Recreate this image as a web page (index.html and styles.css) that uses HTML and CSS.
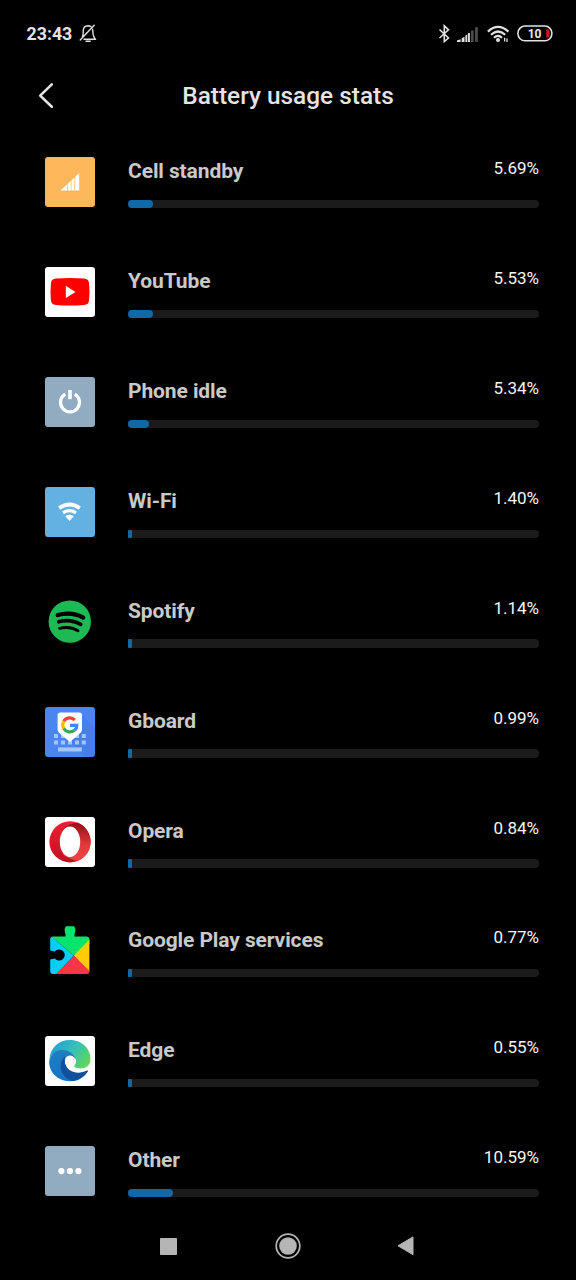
FILE: index.html
```html
<!DOCTYPE html>
<html lang="en">
<head>
<meta charset="utf-8">
<title>Battery usage stats</title>
<link rel="stylesheet" href="styles.css">
</head>
<body>
<div class="screen">
  <header class="status">
    <div class="status-left">
      <span class="clock">23:43</span>
      <svg class="mute" width="18" height="20" viewBox="0 0 18 20" fill="none" stroke="#e2e2e2" stroke-width="1.4" stroke-linecap="round"><path d="M3.5 14 Q4.4 11.5 4.2 8 Q4.3 3 9 2.8 Q10.8 2.8 12 3.7M13.6 6.5 Q14 8 14 11 Q14.4 13.3 16.2 16.2H5M7 18.2H11.2M1.2 17 15.2 2.2"/></svg>
    </div>
    <div class="status-right">
      <svg width="13" height="20" viewBox="0 0 13 20" fill="none" stroke="#e2e2e2" stroke-width="1.6"><path d="M1.5 5.5 10.5 14 6.3 17.6V1.8L10.5 5.8 1.5 14"/></svg>
      <svg class="signal" width="22" height="17" viewBox="0 0 22 17"><path fill="#e2e2e2" d="M0 16V14.6L3.6 13.2V16ZM4.7 16V12.3L7.5 10.8V16ZM8.4 16V9.6L10.2 8.4V16ZM10.9 16V7H12.9V16Z"/><path fill="#4a4a4a" d="M14 16V4.5H16.7V16ZM18 16V1.2H20.9V16Z"/></svg>
      <svg class="wifi" width="23" height="18" viewBox="0 0 23 18"><g fill="none" stroke="#e2e2e2" stroke-width="2.2"><path d="M.9 6.6Q11-2.8 21.4 6.6"/><path d="M4 9.8Q11 3.2 18.2 9.8"/><path d="M7 12.7Q11 9 15 12.7"/></g><circle cx="11" cy="14.9" r="2" fill="#e2e2e2"/><path stroke="#e2e2e2" d="M17.6 12.8V16.4M20 13.4V17" stroke-width="1.3"/></svg>
      <svg class="battery" width="36" height="17" viewBox="0 0 36 17"><rect x=".9" y="1" width="34" height="14.8" rx="7.2" fill="none" stroke="#e2e2e2" stroke-width="1.6"/><path fill="#c90f22" d="M29.5 3.4Q33 4.5 33 8.4T29.5 13.4Q28.6 8.4 29.5 3.4Z"/><text x="17.6" y="12.9" text-anchor="middle" fill="#e8e8e8" class="level">10</text></svg>
    </div>
  </header>
  <div class="title-bar">
    <svg class="back" width="18" height="28" viewBox="0 0 18 28" fill="none" stroke="#e4e4e4" stroke-width="2.6" stroke-linecap="round" stroke-linejoin="round"><path d="M14.8 2.4 3.2 13.6 14.8 24.8"/></svg>
    <h1>Battery usage stats</h1>
  </div>
  <main class="list">
    <section class="row">
      <svg class="icon" viewBox="0 0 50 50"><rect width="50" height="50" rx="3" fill="#feb75b"/><path fill="#fff" d="M15.3 33.4 22.2 27.2V33.4ZM22.9 33.4V26.6L25.8 24V33.4ZM26.4 33.4V23.4L29.4 20.6V33.4ZM30.2 33.4V19.8L34.2 16V33.4Z"/></svg>
      <div class="info"><div class="line"><h2>Cell standby</h2><span>5.69%</span></div><div class="track"><div class="fill" style="width:25px"></div></div></div>
    </section>
    <section class="row">
      <svg class="icon" viewBox="0 0 50 50"><rect width="50" height="50" rx="3" fill="#fff"/><path fill="#f00" d="M11 11.6Q25 10.6 39 11.6Q43.6 11.9 44.1 16.4Q44.9 24.8 44.1 33.2Q43.6 37.6 39 38Q25 39 11 38Q6.4 37.6 5.9 33.2Q5.1 24.8 5.9 16.4Q6.4 11.9 11 11.6Z"/><path fill="#fff" d="M20.8 18.8V31L30.6 24.9Z"/></svg>
      <div class="info"><div class="line"><h2>YouTube</h2><span>5.53%</span></div><div class="track"><div class="fill" style="width:25px"></div></div></div>
    </section>
    <section class="row">
      <svg class="icon" viewBox="0 0 50 50"><rect width="50" height="50" rx="3" fill="#91acc0"/><g fill="none" stroke="#fff" stroke-width="3.2"><path d="M20.2 17.2A9.5 9.5 0 1 0 29.8 17.2"/><path stroke-width="3.6" d="M25 13V22.2"/></g></svg>
      <div class="info"><div class="line"><h2>Phone idle</h2><span>5.34%</span></div><div class="track"><div class="fill" style="width:21px"></div></div></div>
    </section>
    <section class="row">
      <svg class="icon" viewBox="0 0 50 50"><rect width="50" height="50" rx="3" fill="#63b1e2"/><g fill="none" stroke="#fff" stroke-width="3.8"><path d="M14.2 21.1Q24.5 14 34.8 21.1"/><path stroke-width="3.2" d="M18 25.8Q24.5 21.6 31 25.8"/></g><path fill="#fff" d="M20.2 29.2Q24.5 26.4 28.8 29.2L24.5 34Z"/></svg>
      <div class="info"><div class="line"><h2>Wi-Fi</h2><span>1.40%</span></div><div class="track"><div class="fill sliver"></div></div></div>
    </section>
    <section class="row">
      <svg class="icon" viewBox="0 0 50 50"><circle cx="24.8" cy="24.6" r="21.2" fill="#1db954"/><g fill="none" stroke="#000" stroke-linecap="round"><path stroke-width="4.2" d="M12.7 18.1Q26.5 14.3 38.2 20.6"/><path stroke-width="3.6" d="M13.6 24.8Q25.5 21.6 35.8 27.4"/><path stroke-width="2.9" d="M14.5 31.3Q25 29 33 33.7"/></g></svg>
      <div class="info"><div class="line"><h2>Spotify</h2><span>1.14%</span></div><div class="track"><div class="fill sliver"></div></div></div>
    </section>
    <section class="row">
      <svg class="icon" viewBox="0 0 50 50"><rect width="50" height="50" rx="3" fill="#4a86ee"/><path fill="#3b72dc" d="M37 8 50 21V47Q50 50 47 50H40L25 34Z" opacity=".3"/><g fill="#a5c5fb"><path d="M9 27h4v4H9zM16 27h4v4h-4zM30 27h4v4h-4zM36.8 27h4v4h-4zM9 33.6h4v4H9zM16 33.6h4v4h-4zM23 33.6h4v4h-4zM30 33.6h4v4h-4zM36.8 33.6h4v4h-4z"/><path d="M13 40.4H36.8V44.5H13Z"/></g><path fill="#fff" d="M15.5 5.5H34.3Q37 5.5 37 8.2V22.5Q37 24.3 35.6 25.7L25 35 14 25.7Q12.6 24.3 12.6 22.5V8.2Q12.6 5.5 15.5 5.5Z"/><g fill="none" stroke-width="3.2"><path stroke="#ea4335" d="M18.8 14.3A7 7 0 0 1 29.8 13"/><path stroke="#fbbc05" d="M18.8 14.3A7 7 0 0 0 18.8 21.5"/><path stroke="#34a853" d="M18.8 21.5A7 7 0 0 0 29.3 23.3"/><path stroke="#4285f4" d="M29.3 23.3Q31.8 21.4 31.8 18.4H25"/></g></svg>
      <div class="info"><div class="line"><h2>Gboard</h2><span>0.99%</span></div><div class="track"><div class="fill sliver"></div></div></div>
    </section>
    <section class="row">
      <svg class="icon" viewBox="0 0 50 50"><defs><linearGradient id="oa" x1="0" y1="0" x2="0" y2="1"><stop stop-color="#ef2034"/><stop offset="1" stop-color="#c01022"/></linearGradient><linearGradient id="ob" x1="0" y1="0" x2="0" y2="1"><stop stop-color="#9b0c18"/><stop offset=".6" stop-color="#e23a3a"/><stop offset="1" stop-color="#ee4444"/></linearGradient></defs><rect width="50" height="50" rx="3" fill="#fff"/><circle cx="25" cy="24.8" r="20.6" fill="url(#oa)"/><path fill="url(#ob)" d="M18 12Q25 6 33 5.8A20.6 20.6 0 0 1 33 43.8Q25 43 18 37.5Z"/><ellipse cx="25" cy="24.8" rx="10.2" ry="15.3" fill="#fff"/></svg>
      <div class="info"><div class="line"><h2>Opera</h2><span>0.84%</span></div><div class="track"><div class="fill sliver"></div></div></div>
    </section>
    <section class="row">
      <svg class="icon" viewBox="0 0 50 50"><defs><clipPath id="pz"><path d="M8 10.6H20.5V8Q18.5 3 21 .2H29Q31.5 3 29.5 8V10.6H41.5Q44.4 10.6 44.4 13.5V45Q44.4 48 41.5 48H8Q5.2 48 5.2 45V33.6L9.8 32.5A5.6 5.6 0 1 0 9.8 25.5L5.2 24.5V13.5Q5.2 10.6 8 10.6Z"/></clipPath></defs><g clip-path="url(#pz)"><path fill="#05cdfb" d="M0 5 28.8 29.5 8 52H0Z"/><path fill="#07e36b" d="M6.3 10.6V-2H50V14.2L28.8 29.5Z"/><path fill="#fecb05" d="M28.8 29.5 46 12V50Z"/><path fill="#f53649" d="M28.8 29.5 10 49H46V46.5Z"/></g></svg>
      <div class="info"><div class="line"><h2>Google Play services</h2><span>0.77%</span></div><div class="track"><div class="fill sliver"></div></div></div>
    </section>
    <section class="row">
      <svg class="icon" viewBox="0 0 50 50"><defs><linearGradient id="ea" x1="0" y1=".2" x2="1" y2=".7"><stop stop-color="#239fd1"/><stop offset=".5" stop-color="#35bfbd"/><stop offset="1" stop-color="#5ed957"/></linearGradient><linearGradient id="eb" x1="0" y1="0" x2=".3" y2="1"><stop stop-color="#2080bf"/><stop offset="1" stop-color="#1473c9"/></linearGradient></defs><rect width="50" height="50" rx="3" fill="#fff"/><path fill="url(#ea)" d="M4.4 24C5 11.5 14 4 25 4C37.5 4 45.5 13 45.5 23C45.5 29.5 40.8 32.5 35.5 32.5C31 32.5 28.7 31 29.3 29.6C33.2 26 30 18.8 24 18.5C15 12.5 7 15.5 4.4 24Z"/><path fill="url(#eb)" d="M4.2 25C6 16 12.5 13.5 18 14C24 14.3 29.2 18 30 22.8C28 18.6 22.7 18.3 20.5 22C18 29 23 36.5 31.5 37.2C36.5 37.6 40 35.6 42.6 34.7C38.8 41.2 32 45.3 25 45.2C12 45.2 3.7 35.3 4.2 25Z"/><path fill="#12509a" d="M20 20.5C12.8 27 14.5 40.5 27.5 45C34 44.6 39.5 40.8 43 35.2C43.1 34.4 42.6 34.2 41.8 34.6C32 39.5 22.5 35.5 20 27.5Q19.2 24 20 20.5Z"/></svg>
      <div class="info"><div class="line"><h2>Edge</h2><span>0.55%</span></div><div class="track"><div class="fill sliver"></div></div></div>
    </section>
    <section class="row">
      <svg class="icon" viewBox="0 0 50 50"><rect width="50" height="50" rx="3" fill="#91acc0"/><g fill="#fff"><circle cx="16.4" cy="25.1" r="3.1"/><circle cx="25" cy="25.1" r="3.1"/><circle cx="33.4" cy="25.1" r="3.1"/></g></svg>
      <div class="info"><div class="line"><h2>Other</h2><span>10.59%</span></div><div class="track"><div class="fill" style="width:45px"></div></div></div>
    </section>
  </main>
  <nav class="nav">
    <svg width="17" height="17" viewBox="0 0 17 17"><rect width="17" height="17" rx=".8" fill="#b5b5b5"/></svg>
    <svg class="home" width="26" height="26" viewBox="0 0 26 26"><circle cx="13" cy="13" r="11.8" fill="none" stroke="#b5b5b5" stroke-width="1.7"/><circle cx="13" cy="13" r="8.8" fill="#b5b5b5"/></svg>
    <svg width="17" height="20" viewBox="0 0 17 20"><path fill="#b5b5b5" stroke="#b5b5b5" stroke-linejoin="round" d="M16 .9V18.7L1 9.8Z"/></svg>
  </nav>
</div>
</body>
</html>
```
FILE: styles.css
```css
* { box-sizing: border-box; }
body { margin: 0; background: #000; color: #e4e4e4; font-family: Roboto, "Liberation Sans", sans-serif; }
.screen { width: 576px; height: 1280px; overflow: hidden; display: flex; flex-direction: column; }
svg { display: block; flex: none; }
h1, h2 { margin: 0; white-space: nowrap; }
.status { height: 68px; padding: 1px 23px 0 26.5px; display: flex; align-items: center; justify-content: space-between; }
.status-left { display: flex; align-items: center; gap: 7px; }
.mute { margin-bottom: 2px; }
.clock { font-size: 17.8px; font-weight: 700; line-height: 24px; }
.status-right { display: flex; align-items: center; }
.signal { margin-left: 6px; }
.wifi { margin-left: 8px; }
.battery { margin: 0 0 1px 7px; }
.level { font: 700 12px Roboto, sans-serif; }
.title-bar { height: 56px; display: grid; grid-template-columns: 144px 288px 144px; align-items: center; }
.back { margin-left: 37px; }
h1 { font-size: 24.4px; font-weight: 500; text-align: center; line-height: 32px; }
.list { padding: 33.5px 37px 0 45px; display: flex; flex-direction: column; }
.row { height: 109.87px; display: flex; gap: 33px; }
.row:last-child { height: 66px; }
.icon { width: 50px; height: 50px; }
.info { flex: 1; }
.line { height: 42.6px; display: flex; justify-content: space-between; }
.line h2 { font-size: 21px; font-weight: 700; line-height: 28px; letter-spacing: -.1px; color: #c9c9c9; }
.line span { font-size: 17px; line-height: 23px; color: #f6f6f6; }
.track { height: 8.5px; border-radius: 4px; background: #1b1b1b; }
.fill { height: 100%; border-radius: 4px; background: #1068a7; }
.sliver { width: 4px; border-radius: 1px; }
.nav { height: 68px; margin-top: auto; padding: 0 162px 0 160px; display: flex; align-items: center; justify-content: space-between; }
.home { margin-left: 2px; }
```
